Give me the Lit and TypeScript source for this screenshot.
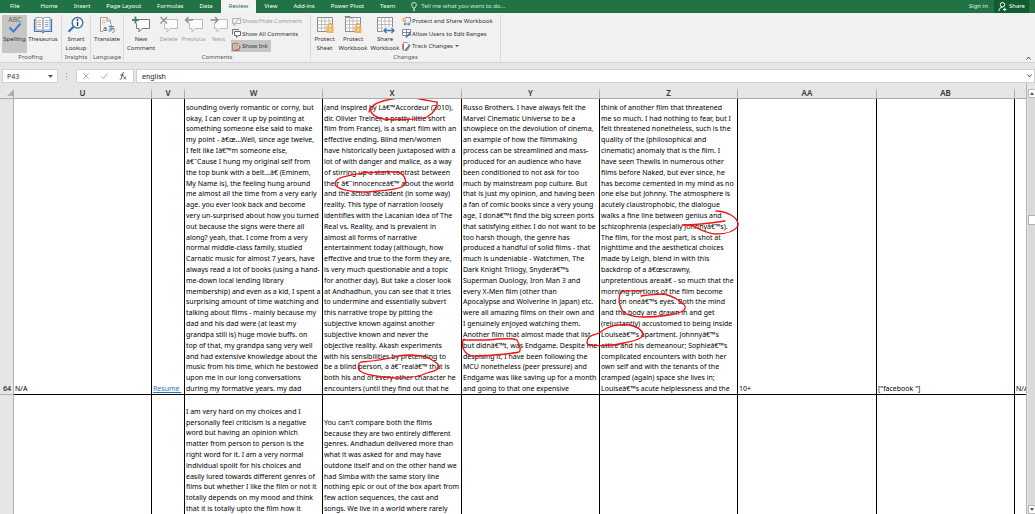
import { LitElement, html, css, svg, nothing, TemplateResult } from "lit";
import { customElement, property, state } from "lit/decorators.js";
import { classMap } from "lit/directives/class-map.js";

const LINE_PITCH = 10.81;

const W64 = [
  "sounding overly romantic or corny, but",
  "okay, I can cover it up by pointing at",
  "something someone else said to make",
  "my point - â€œ...Well, since age twelve,",
  "I felt like Iâ€™m someone else,",
  "â€\u02DCCause I hung my original self from",
  "the top bunk with a belt...â€ (Eminem,",
  "My Name is), the feeling hung around",
  "me almost all the time from a very early",
  "age. you ever look back and become",
  "very un-surprised about how you turned",
  "out because the signs were there all",
  "along? yeah, that. I come from a very",
  "normal middle-class family, studied",
  "Carnatic music for almost 7 years, have",
  "always read a lot of books (using a hand-",
  "me-down local lending library",
  "membership) and even as a kid, I spent a",
  "surprising amount of time watching and",
  "talking about films - mainly because my",
  "dad and his dad were (at least my",
  "grandpa still is) huge movie buffs. on",
  "top of that, my grandpa sang very well",
  "and had extensive knowledge about the",
  "music from his time, which he bestowed",
  "upon me in our long conversations",
  "during my formative years. my dad",
];
const X64 = [
  "(and inspired by Lâ€™Accordeur (2010),",
  "dir. Olivier Treiner, a pretty little short",
  "film from France), is a smart film with an",
  "effective ending. Blind men/women",
  "have historically been juxtaposed with a",
  "lot of with danger and malice, as a way",
  "of stirring up a stark contrast between",
  "their â€\u02DCinnocenceâ€™ about the world",
  "and the actual decadent (in some way)",
  "reality. This type of narration loosely",
  "identifies with the Lacanian idea of The",
  "Real vs. Reality, and is prevalent in",
  "almost all forms of narrative",
  "entertainment today (although, how",
  "effective and true to the form they are,",
  "is very much questionable and a topic",
  "for another day). But take a closer look",
  "at Andhadhun, you can see that it tries",
  "to undermine and essentially subvert",
  "this narrative trope by pitting the",
  "subjective known against another",
  "subjective known and never the",
  "objective reality. Akash experiments",
  "with his sensibilities by pretending to",
  "be a blind person, a â€\u02DCrealâ€™ that is",
  "both his and of every other character he",
  "encounters (until they find out that he",
];
const Y64 = [
  "Russo Brothers. I have always felt the",
  "Marvel Cinematic Universe to be a",
  "showpiece on the devolution of cinema,",
  "an example of how the filmmaking",
  "process can be streamlined and mass-",
  "produced for an audience who have",
  "been conditioned to not ask for too",
  "much by mainstream pop culture. But",
  "that is just my opinion, and having been",
  "a fan of comic books since a very young",
  "age, I donâ€™t find the big screen ports",
  "that satisfying either. I do not want to be",
  "too harsh though, the genre has",
  "produced a handful of solid films - that",
  "much is undeniable - Watchmen, The",
  "Dark Knight Trilogy, Snyderâ€™s",
  "Superman Duology, Iron Man 3 and",
  "every X-Men film (other than",
  "Apocalypse and Wolverine in Japan) etc.",
  "were all amazing films on their own and",
  "I genuinely enjoyed watching them.",
  "Another film that almost made that list",
  "but didnâ€™t, was Endgame. Despite me",
  "despising it, I have been following the",
  "MCU nonetheless (peer pressure) and",
  "Endgame was like saving up for a month",
  "and going to that one expensive",
];
const Z64 = [
  "think of another film that threatened",
  "me so much. I had nothing to fear, but I",
  "felt threatened nonetheless, such is the",
  "quality of the (philosophical and",
  "cinematic) anomaly that is the film. I",
  "have seen Thewlis in numerous other",
  "films before Naked, but ever since, he",
  "has become cemented in my mind as no",
  "one else but Johnny. The atmosphere is",
  "acutely claustrophobic, the dialogue",
  "walks a fine line between genius and",
  "schizophrenia (especially Johnnyâ€™s).",
  "The film, for the most part, is shot at",
  "nighttime and the aesthetical choices",
  "made by Leigh, blend in with this",
  "backdrop of a â€œscrawny,",
  "unpretentious areaâ€ - so much that the",
  "morning portions of the film become",
  "hard on oneâ€™s eyes. Both the mind",
  "and the body are drawn in and get",
  "(reluctantly) accustomed to being inside",
  "Louiseâ€™s apartment. Johnnyâ€™s",
  "attire and his demeanour; Sophieâ€™s",
  "complicated encounters with both her",
  "own self and with the tenants of the",
  "cramped (again) space she lives in;",
  "Louiseâ€™s acute helplessness and the",
];
const W65 = [
  "I am very hard on my choices and I",
  "personally feel criticism is a negative",
  "word but having an opinion which",
  "matter from person to person is the",
  "right word for it. I am a very normal",
  "individual spoilt for his choices and",
  "easily lured towards different genres of",
  "films but whether I like the film or not it",
  "totally depends on my mood and think",
  "that it is totally upto the film how it",
];
const X65 = [
  "You can't compare both the films",
  "because they are two entirely different",
  "genres. Andhadun delivered more than",
  "what it was asked for and may have",
  "outdone itself and on the other hand we",
  "had Simba with the same story line",
  "nothing epic or out of the box apart from",
  "few action sequences, the cast and",
  "songs. We live in a world where rarely",
];

const INK = [
  "M369 112C370 106 378 102 387 100C396 98 410 97 420 99C427 100 433 102 437 102C438 107 434 113 427 117C417 120 394 120 384 119C376 118 371 114 370 109",
  "M368 172C358 174 345 176 340 178C336 180 334 183 336 186C341 190 353 192 366 192C380 191 398 190 403 186C407 183 406 178 402 174C398 170 380 172 368 173",
  "M360 371C357 368 358 363 361 362C374 361 388 359 398 356C410 354 426 355 432 360C437 363 440 365 438 368C437 371 433 371 427 373C416 378 400 379 384 377C374 376 364 374 360 371",
  "M463 340L487 340C497 339 513 338 517 340C519 344 522 350 519 352C511 354 496 355 478 356C470 357 465 353 464 350C461 345 463 340 464 339",
  "M716 211C722 211 727 213 731 215C736 218 739 221 738 226C734 232 724 234 716 234C708 234 701 230 695 227C691 225 686 224 682 225C694 225 712 223 725 221",
  "M642 291C634 291 625 290 621 292C618 296 619 304 621 308C623 314 632 317 644 317C658 317 676 315 683 311C686 309 686 305 683 304C678 299 672 296 664 294C656 294 648 295 641 296",
  "M605 329C611 326 620 324 629 325C637 326 642 330 643 334C644 338 634 341 624 343C612 346 600 346 588 345C586 342 587 337 593 335C599 334 602 331 605 329",
];

const bubble = (stroke: string, extra: TemplateResult) => html`
  <svg width="20" height="18" viewBox="0 0 20 18" fill="none" aria-hidden="true">
    <path d="M6.500 3.500H18.500V12.500H11L8 16V12.500H5.500V7" stroke=${stroke} fill="#fbfbfb" />${extra}
  </svg>`;

const grid = (extra: TemplateResult) => html`
  <svg width="20" height="18" viewBox="0 0 20 18" fill="none" aria-hidden="true">
    <path d="M2.500 1.500H17.500V15.500H2.500Z" fill="#fff" stroke="#8a8a8a" />
    <path d="M2.500 5H17.500M2.500 8.500H17.500M2.500 12H17.500M6.500 1.500V15.500M10 1.500V15.500M14 1.500V15.500" stroke="#a6a6a6" stroke-width=".7" />${extra}
  </svg>`;

const lock = svg`<path d="M13 11V9.500a2 2 0 0 1 4 0V11" stroke="#e8a54b" stroke-width="1.200"/><path d="M11.500 10.500H18.500V17H11.500Z" fill="#f2b35c"/><path d="M15 12.500V15" stroke="#fff"/>`;

const ICONS: Record<string, TemplateResult> = {
  spelling: html`<svg width="20" height="18" viewBox="0 0 20 18" fill="none" aria-hidden="true">
    <text x="10" y="6" text-anchor="middle" font-size="7" fill="#6a6a6a">ABC</text>
    <path d="M4.500 11.500L8.500 15.500L15.500 7.500" stroke="#3f7fc4" stroke-width="2" /></svg>`,
  thesaurus: html`<svg width="20" height="18" viewBox="0 0 20 18" fill="none" aria-hidden="true">
    <path d="M2.500 3.500H1.500V15.500H8.500L10 16.500L11.500 15.500H18.500V3.500H17.500" stroke="#4478b0" stroke-width="1.200" fill="#dfeaf5" />
    <path d="M3 1.500H8.500L10 2.500V15L8.500 14H3ZM17 1.500H11.500L10 2.500V15L11.500 14H17Z" fill="#fff" stroke="#7d8ea0" stroke-width=".8" />
    <path d="M4.500 4.500H8M4.500 10.500H8M12 4.500H15.500" stroke="#8fa0b0" stroke-width=".8" /><path d="M4.500 6.500H8M4.500 8.500H8" stroke="#e07f55" stroke-width=".8" />
    <path d="M12 6.500H15.500M12 8.500H15.500M12 10.500H15.500" stroke="#5b95cf" stroke-width=".8" /></svg>`,
  lookup: html`<svg width="20" height="18" viewBox="0 0 20 18" fill="none" aria-hidden="true">
    <circle cx="11.500" cy="6.800" r="5.300" fill="#fff" stroke="#3674b5" stroke-width="1.400" />
    <path d="M7.500 10.800L2.500 15.800" stroke="#3674b5" stroke-width="2.200" />
    <path d="M11.500 6V10" stroke="#333" stroke-width="1.400" /><circle cx="11.500" cy="4" r=".9" fill="#333" /></svg>`,
  translate: html`<svg width="20" height="18" viewBox="0 0 20 18" fill="none" aria-hidden="true">
    <path d="M3.500 1.500H10L13.500 5V15.500H3.500Z" fill="#fff" stroke="#9a9a9a" /><path d="M10 1.500V5H13.500" stroke="#9a9a9a" />
    <path d="M5 4H8.500M5 6H10M5 8H8" stroke="#e6a860" stroke-width=".9" />
    <path d="M6 8H18V17H6Z" fill="#f2f2f2" />
    <text x="6" y="15" font-size="7" fill="#333">a</text>
    <path d="M11.500 10.500H17M14 8.500V14.500M16.500 11.500C14.500 15.500 12 16 11.800 14.500C11.600 12.500 17.500 11 17.500 14.200C17.500 15.600 16.500 16.300 15.300 16.500" stroke="#4a6d94" stroke-width=".8" /></svg>`,
  add: bubble("#7a7a7a", svg`<path d="M4.500 .5V7.500M1 4H8" stroke="#f0f0f0" stroke-width="3.500"/><path d="M4.500 .5V7.500M1 4H8" stroke="#3d8a62" stroke-width="1.800"/>`),
  remove: bubble("#bcbcbc", svg`<path d="M1.500 1L8 7.500M8 1L1.500 7.500" stroke="#8c8c8c" stroke-width="1.300"/>`),
  previous: bubble("#bcbcbc", svg`<path d="M1.500 4H9M4.500 1L1.500 4L4.500 7" stroke="#8c8c8c" stroke-width="1.300"/>`),
  next: bubble("#bcbcbc", svg`<path d="M1.500 4H9M6 1L9 4L6 7" stroke="#8c8c8c" stroke-width="1.300"/>`),
  sheet: grid(lock),
  book: grid(svg`<path d="M1.500 .5H7L8.500 2.500" stroke="#8a8a8a"/>${lock}`),
  share: grid(svg`<path d="M8 11H20V18H8Z" fill="#f0f0f0"/><path d="M9 14.500H19M11.500 12L9 14.500L11.500 17M16.500 12L19 14.500L16.500 17" stroke="#3b78b5" stroke-width="1.300"/>`),
  showOne: html`<svg width="9" height="9" viewBox="0 0 9 9" fill="none" aria-hidden="true"><path d="M.5 1.500H8.500V6.500H4L2 8.500V6.500H.5Z" stroke="#b0b0b0"/><path d="M1 8L8 .5" stroke="#b0b0b0"/></svg>`,
  showAll: html`<svg width="9" height="9" viewBox="0 0 9 9" fill="none" aria-hidden="true"><path d="M.5 5.500V.5H7" stroke="#777"/><path d="M2.500 2.500H8.500V6.500H6L4.500 8.500V6.500H2.500Z" stroke="#666" fill="#fff"/></svg>`,
  ink: html`<svg width="9" height="9" viewBox="0 0 9 9" fill="none" aria-hidden="true"><path d="M.5 1.500H6M.5 1.500V8.500H8" stroke="#888"/><path d="M2 7L7 1" stroke="#c9a489" stroke-width="1.500"/><path d="M3 8C6 8 9 6.500 7.500 3.500" stroke="#d9532c" stroke-width="1.200"/></svg>`,
  protect: html`<svg width="9" height="9" viewBox="0 0 9 9" fill="none" aria-hidden="true"><path d="M3.500 .5H8.500V5.500" stroke="#7a8ea5"/><path d="M.5 2.500H4V5H.5Z" fill="#f2b35c"/><path d="M1.200 2.500V1H3.200V2.500" stroke="#e8a54b" stroke-width=".8"/><path d="M2 7H8M3.500 5.500L2 7L3.500 8.500M6.500 5.500L8 7L6.500 8.500" stroke="#3b78b5"/></svg>`,
  ranges: html`<svg width="9" height="9" viewBox="0 0 9 9" fill="none" aria-hidden="true"><path d="M.5 .5H8.500V6.500H.5ZM.5 3.500H8.500M4.500 .5V6.500" stroke="#8a8a8a" fill="#fff"/><path d="M4 8.500L8.500 3.500" stroke="#3b78b5" stroke-width="1.500"/></svg>`,
  track: html`<svg width="9" height="9" viewBox="0 0 9 9" fill="none" aria-hidden="true"><path d="M1.500 .5H5L7.500 3.500L5.500 8.500H1.500Z" stroke="#9a9a9a" fill="#fff"/><path d="M1 2V7.500" stroke="#d9532c" stroke-width="1.400"/><path d="M3.500 8L8 3" stroke="#3b78b5" stroke-width="1.600"/></svg>`,
};

@customElement("ribbon-button")
export class RibbonButton extends LitElement {
  @property() icon = "";
  @property({ type: Array }) lines: string[] = [];
  @property({ type: Boolean }) small = false;
  @property({ type: Boolean }) off = false;
  @property({ type: Boolean }) pressed = false;
  @property({ type: Boolean }) menu = false;

  static styles = css`
    :host { display: block; }
    button { display: flex; border: 0; padding: 0; margin: 0; background: none; color: #333; font: inherit; white-space: nowrap; }
    .large { flex-direction: column; align-items: center; width: 100%; height: 38px; padding-top: 1px; line-height: 9px; }
    .large svg { margin-bottom: 1px; }
    .small { align-items: center; height: 12px; padding: 0 3px 0 1px; gap: 1px; line-height: 12px; }
    .off { color: #9c9c9c; }
    .pressed { background: #c6c6c6; }
    svg { display: block; flex: none; }
    .arrow { width: 0; height: 0; margin-left: 1px; border: 2px solid transparent; border-top-color: #555; border-bottom: 0; }
  `;
  render() {
    return html`<button type="button" ?disabled=${this.off}
      class=${classMap({ large: !this.small, small: this.small, off: this.off, pressed: this.pressed })}>
      ${ICONS[this.icon]}
      ${this.lines.map((l) => html`<span>${l}</span>`)}
      ${this.menu ? html`<span class="arrow"></span>` : nothing}
    </button>`;
  }
}

@customElement("app-root")
export class AppRoot extends LitElement {
  @state() private tab = "Review";

  static styles = css`
    :host { display: flex; flex-direction: column; height: 100vh; overflow: hidden; background: #e6e6e6; color: #222; font: 6px/9px "Noto Sans", "Open Sans", sans-serif; }
    * { box-sizing: border-box; }
    svg { display: block; }
    button, input { font: inherit; margin: 0; padding: 0; border: 0; background: none; border-radius: 0; outline: 0; }

    .tabs { display: flex; flex: none; align-items: stretch; height: 13px; background: #217346; color: #fff; }
    .tab { padding: 0 8px; color: #fff; white-space: nowrap; }
    .file { padding: 0 13px 0 10px; }
    .active { background: #f3f3f3; color: #217346; }
    .tell { display: flex; flex: 1; align-items: center; gap: 4px; padding-left: 8px; min-width: 0; }
    .tell input { flex: 1; min-width: 0; color: #fff; }
    .tell input::placeholder { color: #d3e6db; opacity: 1; }
    .share { display: flex; align-items: center; gap: 2px; margin: 0 6px 0 0; padding: 0 4px; background: #0e5c2f; color: #fff; }
    .signin { padding: 0 6px; color: #e0eee6; }

    .ribbon { display: flex; flex: none; height: 50px; padding-top: 2px; background: #f1f1f1; border-bottom: 1px solid #d2d2d2; }
    .group { display: flex; flex-direction: column; flex: none; border-right: 1px solid #dadada; margin-bottom: 1px; }
    .items { display: flex; height: 38px; }
    .label { text-align: center; color: #555; line-height: 9px; }
    .stack { display: flex; flex-direction: column; justify-content: space-between; align-items: flex-start; height: 37px; }
    .proofing { width: 62px; } .proofing .items { padding-left: 2px; gap: 1px; }
    .insights { width: 29px; } .language { width: 33px; }
    .comments { width: 187px; } .comments .items { padding-left: 2px; }
    .changes { width: 190px; } .changes .items { padding-left: 1px; }
    .w25 { width: 25px; } .w28 { width: 28px; } .w30 { width: 30px; } .w32 { width: 32px; }
    .collapse { align-self: flex-end; margin: 0 4px 2px auto; }

    .formula { display: flex; flex: none; align-items: stretch; height: 14px; margin: 6px 0 0 2px; font-size: 7px; gap: 2px; }
    .box { display: flex; align-items: center; background: #fff; border: 1px solid #d0d0d0; }
    .name { width: 56px; padding: 0 4px; }
    .name input { flex: 1; min-width: 0; color: #333; }
    .dots { width: 14px; display: flex; align-items: center; justify-content: center; }
    .fx { width: 58px; justify-content: space-between; padding: 0 6px; }
    .value { flex: 1; padding: 0 2px 0 5px; min-width: 0; }
    .value input { flex: 1; min-width: 0; color: #222; }

    .body { display: flex; flex: 1; min-height: 0; }
    .sheet { position: relative; flex: 1; min-width: 0; overflow: hidden; border-right: 1px solid #b4b4b4; }
    .cells { table-layout: fixed; border-collapse: separate; border-spacing: 0; width: 100%; height: 100%; font-size: 7px; line-height: 10px; }
    .c-row { width: 14px; } .c-138 { width: 138px; } .c-33 { width: 33px; } .c-139 { width: 139px; }
    th { padding: 0; font-weight: 400; color: #333; background: #e6e6e6; border-right: 1px solid #b0b0b0; }
    thead tr { height: 16px; }
    thead th { height: 16px; padding-top: 4px; border-bottom: 1px solid #aaa; font-size: 8px; font-weight: 600; line-height: 11px;
      border-image: linear-gradient(#e6e6e6 30%, #aaa 60%) 1; }
    tbody th { vertical-align: bottom; font-weight: 600; text-align: right; padding: 0 2px 0 0; border-bottom: 1px solid #b0b0b0; }
    td { padding: 0 0 0 1px; vertical-align: bottom; white-space: nowrap; overflow: hidden; background: #fff; color: #000;
      border-right: 1px solid #000; border-bottom: 1px solid #000; }
    .r64 { height: 296px; }
    .lines { display: grid; grid-auto-rows: 1fr; align-items: end; }
    .last { border-right: 0; }
    .r65 td, .r65 th { border-bottom: 0; }
    a { color: #2e75b6; }
    .corner { width: 0; height: 0; margin: 1px 0 0 auto; border: 3px solid; border-color: transparent #b0b0b0 #b0b0b0 transparent; }
    .ink { position: absolute; left: 0; top: 16px; pointer-events: none; }

    .scroll { display: flex; flex-direction: column; flex: none; width: 8px; padding: 6px 0 0 1px; }
    .sbtn { display: grid; place-items: center; height: 9px; background: #fff; border: 1px solid #b8b8b8; border-right: 0; }
    .track { display: flex; flex: 1; flex-direction: column; background: #dadada; }
    .before { flex: 119; } .after { flex: 284; }
    .thumb { height: 10px; background: #fff; border: 1px solid #b0b0b0; border-right: 0; }
  `;

  private lines(text: string[]) {
    return html`<div class="lines" style="height:${Math.round(text.length * LINE_PITCH)}px">
      ${text.map((t) => html`<span>${t}</span>`)}
    </div>`;
  }

  render() {
    const tabs = ["File", "Home", "Insert", "Page Layout", "Formulas", "Data", "Review", "View", "Add-ins", "Power Pivot", "Team"];
    return html`
      <nav class="tabs">
        ${tabs.map((t) => html`<button type="button" class=${classMap({ tab: true, file: t === "File", active: t === this.tab })}
          @click=${() => (this.tab = t)}>${t}</button>`)}
        <label class="tell">
          <svg width="6" height="9" viewBox="0 0 6 9" fill="none" stroke="#fff" stroke-width=".8" aria-hidden="true">
            <path d="M2 6C2 5 .6 4.400 .6 2.900a2.400 2.400 0 0 1 4.800 0C5.400 4.400 4 5 4 6ZM2 7.300H4M2.300 8.500H3.700" /></svg>
          <input type="text" aria-label="Tell me what you want to do" placeholder="Tell me what you want to do..." />
        </label>
        <button type="button" class="signin">Sign in</button>
        <button type="button" class="share">
          <svg width="9" height="9" viewBox="0 0 9 9" fill="none" stroke="#fff" aria-hidden="true">
            <circle cx="4.500" cy="2.700" r="2.200" /><path d="M1 9C1 6.500 2.500 5.200 4.500 5.200M5 7.500H8.500M6.750 5.750V9" /></svg>Share
        </button>
      </nav>

      <section class="ribbon" aria-label="Review">
        <div class="group proofing">
          <div class="items">
            <ribbon-button class="w25" icon="spelling" pressed .lines=${["Spelling"]}></ribbon-button>
            <ribbon-button class="w30" icon="thesaurus" .lines=${["Thesaurus"]}></ribbon-button>
          </div>
          <div class="label">Proofing</div>
        </div>
        <div class="group insights">
          <div class="items"><ribbon-button class="w28" icon="lookup" .lines=${["Smart", "Lookup"]}></ribbon-button></div>
          <div class="label">Insights</div>
        </div>
        <div class="group language">
          <div class="items"><ribbon-button class="w32" icon="translate" .lines=${["Translate"]}></ribbon-button></div>
          <div class="label">Language</div>
        </div>
        <div class="group comments">
          <div class="items">
            <ribbon-button class="w30" icon="add" .lines=${["New", "Comment"]}></ribbon-button>
            <ribbon-button class="w25" icon="remove" off .lines=${["Delete"]}></ribbon-button>
            <ribbon-button class="w25" icon="previous" off .lines=${["Previous"]}></ribbon-button>
            <ribbon-button class="w25" icon="next" off .lines=${["Next"]}></ribbon-button>
            <div class="stack">
              <ribbon-button small off icon="showOne" .lines=${["Show/Hide Comment"]}></ribbon-button>
              <ribbon-button small icon="showAll" .lines=${["Show All Comments"]}></ribbon-button>
              <ribbon-button small pressed icon="ink" .lines=${["Show Ink"]}></ribbon-button>
            </div>
          </div>
          <div class="label">Comments</div>
        </div>
        <div class="group changes">
          <div class="items">
            <ribbon-button class="w25" icon="sheet" .lines=${["Protect", "Sheet"]}></ribbon-button>
            <ribbon-button class="w32" icon="book" .lines=${["Protect", "Workbook"]}></ribbon-button>
            <ribbon-button class="w32" icon="share" .lines=${["Share", "Workbook"]}></ribbon-button>
            <div class="stack">
              <ribbon-button small icon="protect" .lines=${["Protect and Share Workbook"]}></ribbon-button>
              <ribbon-button small icon="ranges" .lines=${["Allow Users to Edit Ranges"]}></ribbon-button>
              <ribbon-button small menu icon="track" .lines=${["Track Changes"]}></ribbon-button>
            </div>
          </div>
          <div class="label">Changes</div>
        </div>
        <button type="button" class="collapse" aria-label="Collapse the ribbon">
          <svg width="5" height="4" viewBox="0 0 5 4" fill="none" stroke="#555"><path d="M.5 3.500L2.500 1L4.500 3.500" /></svg>
        </button>
      </section>

      <div class="formula">
        <label class="box name">
          <input type="text" aria-label="Name box" value="P43" />
          <svg width="5" height="3" viewBox="0 0 5 3" fill="#555"><path d="M0 0H5L2.500 3Z" /></svg>
        </label>
        <span class="dots"><svg width="2" height="7" viewBox="0 0 2 7" fill="#a0a0a0"><path d="M0 0H1V1H0ZM0 3H1V4H0ZM0 6H1V7H0Z" /></svg></span>
        <div class="box fx">
          <button type="button" aria-label="Cancel"><svg width="6" height="6" viewBox="0 0 6 6" stroke="#a8a8a8"><path d="M.5 .5L5.500 5.500M5.500 .5L.5 5.500" /></svg></button>
          <button type="button" aria-label="Enter"><svg width="7" height="6" viewBox="0 0 7 6" fill="none" stroke="#a8a8a8"><path d="M.5 3.500L2.500 5.500L6.500 .5" /></svg></button>
          <button type="button" aria-label="Insert function"><svg width="8" height="8" viewBox="0 0 8 8" fill="none" stroke="#444">
            <path d="M5 .7C3.500 .2 3.300 2 3 4C2.700 6 2.300 7.600 .8 7.300M1.500 3H4.700" /><path d="M4.500 4.500L7 7.300M7 4.500L4.500 7.300" stroke-width=".8" /></svg></button>
        </div>
        <label class="box value">
          <input type="text" aria-label="Formula bar" value="english" />
          <svg width="5" height="4" viewBox="0 0 5 4" fill="none" stroke="#555"><path d="M.5 .5L2.500 3L4.500 .5" /></svg>
        </label>
      </div>

      <div class="body">
        <div class="sheet">
          <table class="cells">
            <colgroup>
              <col class="c-row" /><col class="c-138" /><col class="c-33" /><col class="c-138" /><col class="c-139" />
              <col class="c-138" /><col class="c-138" /><col class="c-139" /><col class="c-138" /><col />
            </colgroup>
            <thead>
              <tr>
                <th><div class="corner"></div></th>
                ${["U", "V", "W", "X", "Y", "Z", "AA", "AB"].map((c) => html`<th scope="col">${c}</th>`)}
                <th class="last"></th>
              </tr>
            </thead>
            <tbody>
              <tr class="r64">
                <th scope="row">64</th>
                <td>N/A</td>
                <td><a href="#resume">Resume&nbsp;</a></td>
                <td>${this.lines(W64)}</td>
                <td>${this.lines(X64)}</td>
                <td>${this.lines(Y64)}</td>
                <td>${this.lines(Z64)}</td>
                <td>10+</td>
                <td>["facebook "]</td>
                <td class="last">N/A</td>
              </tr>
              <tr class="r65">
                <th scope="row"></th>
                <td></td><td></td>
                <td>${this.lines(W65)}</td>
                <td>${this.lines(X65)}</td>
                <td></td><td></td><td></td><td></td><td class="last"></td>
              </tr>
            </tbody>
          </table>
          <svg class="ink" width="1026" height="415" viewBox="0 99 1026 415" fill="none" stroke="#f01414" stroke-width="1.300" stroke-linecap="round" aria-hidden="true">
            ${INK.map((d) => svg`<path d=${d} />`)}
          </svg>
        </div>
        <div class="scroll">
          <button type="button" class="sbtn" aria-label="Scroll up"><svg width="4" height="3" viewBox="0 0 4 3" fill="#555"><path d="M0 3H4L2 0Z" /></svg></button>
          <div class="track"><div class="before"></div><div class="thumb"></div><div class="after"></div></div>
          <button type="button" class="sbtn" aria-label="Scroll down"><svg width="4" height="3" viewBox="0 0 4 3" fill="#555"><path d="M0 0H4L2 3Z" /></svg></button>
        </div>
      </div>`;
  }
}
